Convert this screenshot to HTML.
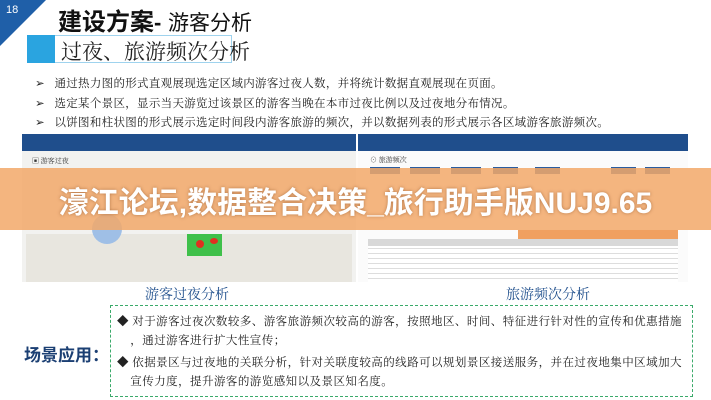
<!DOCTYPE html>
<html><head><meta charset="utf-8"><style>
*{margin:0;padding:0;box-sizing:border-box}
body{width:711px;height:400px;overflow:hidden;background:#fff;position:relative;font-family:"Liberation Serif","Noto Serif CJK SC",serif;color:#222}
.a{position:absolute}
.sans{font-family:"Liberation Sans","Noto Sans CJK SC",sans-serif}
.nav{background:#1f4e8c;height:17px}
.btn{position:absolute;height:7px;background:#2a5c9e}
</style></head><body>
<svg class="a" style="left:0;top:0" width="50" height="50"><polygon points="0,0 46,0 0,46" fill="#1f5fa8"/></svg>
<div class="a sans" style="left:6px;top:4px;color:#fff;font-size:11px">18</div>
<div class="a sans" style="left:58px;top:2px;font-size:24px;font-weight:bold;color:#111;white-space:nowrap">建设方案<span style="font-size:22px">-</span> <span style="font-weight:normal;font-size:21px">游客分析</span></div>
<div class="a" style="left:27px;top:35px;width:205px;height:28px;border:1px solid #9fd3ee"></div>
<div class="a" style="left:27px;top:35px;width:28px;height:28px;background:#2aa4e0"></div>
<div class="a" style="left:61px;top:36px;font-size:21px;color:#222">过夜、旅游频次分析</div>
<div class="a" style="left:35px;top:75px;font-size:11.5px;line-height:19.5px;white-space:nowrap;letter-spacing:0.3px">
<div>➢&nbsp;&nbsp; 通过热力图的形式直观展现选定区域内游客过夜人数，并将统计数据直观展现在页面。</div>
<div>➢&nbsp;&nbsp; 选定某个景区，显示当天游览过该景区的游客当晚在本市过夜比例以及过夜地分布情况。</div>
<div>➢&nbsp;&nbsp; 以饼图和柱状图的形式展示选定时间段内游客旅游的频次，并以数据列表的形式展示各区域游客旅游频次。</div>
</div>
<!-- left screenshot -->
<div class="a" style="left:22px;top:134px;width:334px;height:148px;background:#f2f2f0;overflow:hidden">
<div class="nav"></div>
<div class="a" style="left:10px;top:22px;font-size:7px;color:#333">▣ 游客过夜</div>
<div class="a" style="left:4px;top:100px;width:326px;height:48px;background:#e8e6df"></div>
<div class="a" style="left:70px;top:80px;width:30px;height:30px;border-radius:50%;background:#9fbfe6"></div>
<div class="a" style="left:165px;top:100px;width:35px;height:22px;background:#3fc04a"></div>
<div class="a" style="left:174px;top:106px;width:8px;height:8px;background:#e03020;border-radius:50%"></div>
<div class="a" style="left:188px;top:104px;width:8px;height:6px;background:#e03020;border-radius:50%"></div>
</div>
<!-- right screenshot -->
<div class="a" style="left:358px;top:134px;width:330px;height:148px;background:#fbfbfb;overflow:hidden">
<div class="nav"></div>
<div class="a" style="left:12px;top:21px;font-size:7px;color:#333">⊙ 旅游频次</div>
<div class="btn" style="left:12px;top:33px;width:30px"></div>
<div class="btn" style="left:52px;top:33px;width:30px"></div>
<div class="btn" style="left:93px;top:33px;width:30px"></div>
<div class="btn" style="left:135px;top:33px;width:25px"></div>
<div class="btn" style="left:177px;top:33px;width:25px"></div>
<div class="btn" style="left:253px;top:33px;width:25px"></div>
<div class="btn" style="left:287px;top:33px;width:25px"></div>
<div class="a" style="left:160px;top:96px;width:160px;height:40px;background:#f0a060"></div>
<div class="a" style="left:10px;top:105px;width:310px;height:43px;background:repeating-linear-gradient(#fff 0 4px,#ddd 4px 5px)"></div>
<div class="a" style="left:10px;top:105px;width:310px;height:7px;background:#d8d8d8"></div>
</div>
<!-- banner -->
<div class="a" style="left:0;top:168px;width:711px;height:62px;background:rgba(242,168,105,0.85)"></div>
<div class="a sans" style="left:0;top:178px;width:711px;text-align:center;font-size:30px;font-weight:bold;color:#fff;white-space:nowrap;text-shadow:0 0 3px rgba(120,60,20,.5)">濠江论坛,数据整合决策_旅行助手版NUJ9.65</div>
<div class="a" style="left:137px;top:284px;width:100px;text-align:center;font-size:14px;color:#1e4e8c">游客过夜分析</div>
<div class="a" style="left:498px;top:284px;width:100px;text-align:center;font-size:14px;color:#1e4e8c">旅游频次分析</div>
<div class="a" style="left:110px;top:305px;width:583px;height:92px;border:1.5px dashed #3aaa6a"></div>
<div class="a sans" style="left:24px;top:341px;font-size:17px;font-weight:bold;color:#1b3f73">场景应用：</div>
<div class="a" style="left:117px;top:313px;font-size:11.5px;line-height:19px;white-space:nowrap;letter-spacing:0.45px">
<div>◆ 对于游客过夜次数较多、游客旅游频次较高的游客，按照地区、时间、特征进行针对性的宣传和优惠措施</div>
<div>&nbsp;&nbsp;&nbsp;&nbsp;，通过游客进行扩大性宣传；</div>
<div style="margin-top:3px">◆ 依据景区与过夜地的关联分析，针对关联度较高的线路可以规划景区接送服务，并在过夜地集中区域加大</div>
<div>&nbsp;&nbsp;&nbsp;&nbsp;宣传力度，提升游客的游览感知以及景区知名度。</div>
</div>
</body></html>
